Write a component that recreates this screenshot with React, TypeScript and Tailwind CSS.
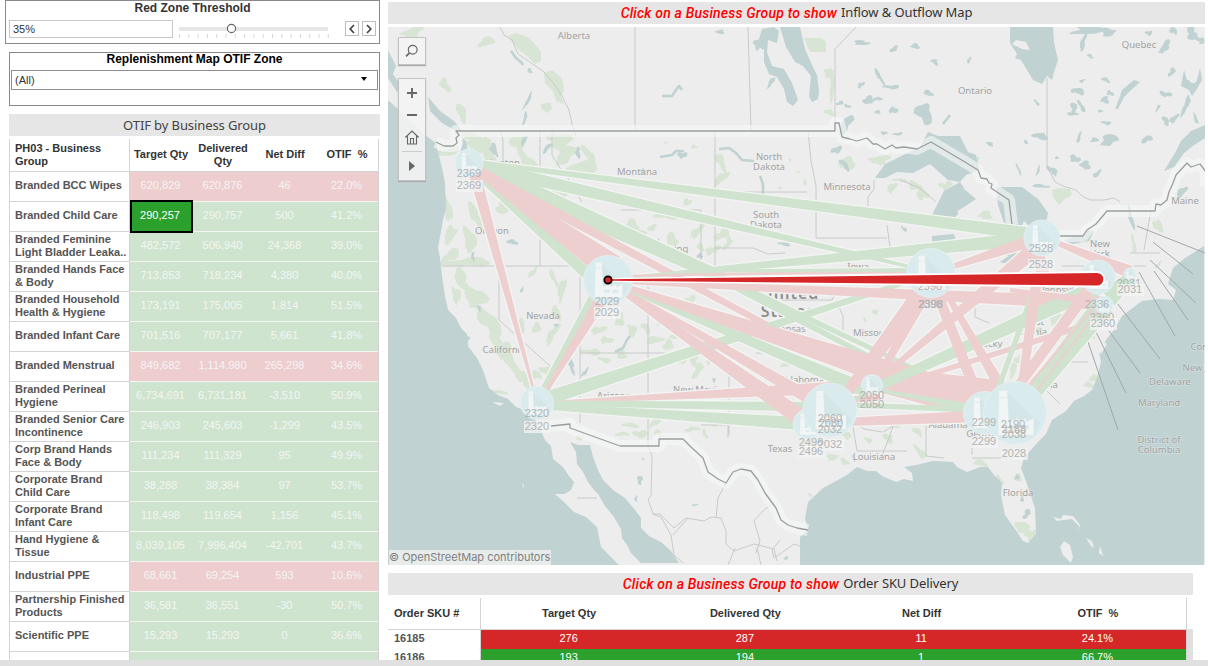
import React from "react";

type Tone = "red" | "green";
type GroupRow = { name: string; cells: string[]; tone: Tone; selected?: boolean };

const GROUPS: GroupRow[] = [
  { name: "Branded BCC Wipes", cells: ["620,829", "620,876", "46", "22.0%"], tone: "red" },
  { name: "Branded Child Care", cells: ["290,257", "290,757", "500", "41.2%"], tone: "green", selected: true },
  { name: "Branded Feminine\nLight Bladder Leaka..", cells: ["482,572", "506,940", "24,368", "39.0%"], tone: "green" },
  { name: "Branded Hands Face\n& Body", cells: ["713,853", "718,234", "4,380", "40.0%"], tone: "green" },
  { name: "Branded Household\nHealth & Hygiene", cells: ["173,191", "175,005", "1,814", "51.5%"], tone: "green" },
  { name: "Branded Infant Care", cells: ["701,516", "707,177", "5,661", "41.8%"], tone: "green" },
  { name: "Branded Menstrual", cells: ["849,682", "1,114,980", "265,298", "34.6%"], tone: "red" },
  { name: "Branded Perineal\nHygiene", cells: ["6,734,691", "6,731,181", "-3,510", "50.9%"], tone: "green" },
  { name: "Branded Senior Care\nIncontinence", cells: ["246,903", "245,603", "-1,299", "43.5%"], tone: "green" },
  { name: "Corp Brand Hands\nFace & Body", cells: ["111,234", "111,329", "95", "49.9%"], tone: "green" },
  { name: "Corporate Brand\nChild Care", cells: ["38,288", "38,384", "97", "53.7%"], tone: "green" },
  { name: "Corporate Brand\nInfant Care", cells: ["118,498", "119,654", "1,156", "45.1%"], tone: "green" },
  { name: "Hand Hygiene &\nTissue", cells: ["8,039,105", "7,996,404", "-42,701", "43.7%"], tone: "green" },
  { name: "Industrial PPE", cells: ["68,661", "69,254", "593", "10.6%"], tone: "red" },
  { name: "Partnership Finished\nProducts", cells: ["36,581", "36,551", "-30", "50.7%"], tone: "green" },
  { name: "Scientific PPE", cells: ["15,293", "15,293", "0", "36.6%"], tone: "green" },
  { name: "", cells: ["", "", "", ""], tone: "green" },
];

const SKUS = [
  { sku: "16185", cells: ["276", "287", "11", "24.1%"], bg: "bg-[#d62728]" },
  { sku: "16186", cells: ["193", "194", "1", "66.7%"], bg: "bg-[#2ca02c]" },
];

const P = "#eecfd0";
const G = "#cfe3cf";

/* [x1, y1, width1, x2, y2, width2, colour] */
type Flow = [number, number, number, number, number, number, string];
const FLOWS: Flow[] = [
  [469, 161, 4, 1038, 235, 13, G],
  [469, 164, 14, 920, 269, 3, G],
  [469, 165, 20, 725, 279, 12, G],
  [720, 277, 7, 985, 402, 3, G],
  [720, 279, 7, 985, 417, 4, G],
  [469, 167, 6, 596, 282, 12, G],
  [469, 166, 10, 870, 380, 5, P],
  [469, 166, 4, 612, 268, 28, P],
  [537, 402, 2, 473, 168, 12, P],
  [540, 398, 8, 600, 290, 14, G],
  [541, 400, 3, 610, 285, 14, P],
  [545, 399, 14, 925, 276, 4, G],
  [537, 403, 2, 872, 386, 14, P],
  [537, 403, 5, 832, 407, 10, G],
  [537, 406, 6, 808, 424, 13, G],
  [608, 281, 5, 812, 426, 18, P],
  [608, 281, 3, 830, 410, 14, P],
  [608, 281, 4, 870, 392, 14, G],
  [608, 281, 4, 985, 405, 32, P],
  [608, 280, 3, 1040, 238, 14, G],
  [608, 276, 2, 930, 271, 4, P],
  [700, 271, 3, 930, 270, 4, G],
  [608, 281, 4, 1104, 303, 14, P],
  [845, 395, 10, 932, 280, 20, P],
  [883, 370, 7, 930, 285, 12, P],
  [872, 385, 4, 1040, 245, 16, P],
  [888, 372, 3, 985, 290, 5, P],
  [872, 378, 24, 1000, 402, 44, P],
  [850, 400, 6, 880, 396, 8, P],
  [850, 405, 5, 985, 410, 6, G],
  [878, 390, 3, 985, 410, 8, G],
  [845, 422, 8, 985, 416, 12, P],
  [850, 402, 3, 905, 375, 5, G],
  [875, 388, 9, 1098, 287, 16, G],
  [925, 376, 5, 1096, 322, 6, P],
  [932, 280, 10, 980, 402, 11, P],
  [940, 283, 3, 975, 345, 3, G],
  [940, 282, 5, 1008, 400, 12, P],
  [936, 272, 4, 1040, 238, 13, P],
  [1036, 250, 14, 1045, 280, 12, P],
  [1034, 290, 6, 996, 395, 5, G],
  [1036, 285, 11, 1020, 400, 8, P],
  [1045, 238, 4, 1130, 272, 13, P],
  [1010, 290, 4, 1100, 302, 8, P],
  [1008, 400, 10, 1092, 285, 12, P],
  [1026, 402, 15, 1104, 305, 22, G],
  [1018, 398, 3, 1100, 300, 2, P],
  [1028, 402, 2, 1100, 308, 2, P],
  [1108, 298, 20, 1132, 276, 10, G],
];

const taper = ([x1, y1, a, x2, y2, b]: Flow) => {
  const len = Math.hypot(x2 - x1, y2 - y1);
  const nx = -(y2 - y1) / len / 2;
  const ny = (x2 - x1) / len / 2;
  return [
    [x1 + nx * a, y1 + ny * a],
    [x2 + nx * b, y2 + ny * b],
    [x2 - nx * b, y2 - ny * b],
    [x1 - nx * a, y1 - ny * a],
  ]
    .map(([x, y]) => x.toFixed(1) + "," + y.toFixed(1))
    .join(" ");
};

/* Irregular outline around a slanted ellipse, used for small lakes and parks. */
const blob = (x: number, y: number, rx: number, ry: number) => {
  const n = 16;
  const pts: string[] = [];
  const p1 = x * 1.7 + y;
  const p2 = x * 0.9 + y * 2.3;
  const shear = Math.sin(x + y * 3) * 0.5;
  for (let i = 0; i < n; i++) {
    const t = (i / n) * Math.PI * 2;
    const jag = Math.sin(x * 12.9 + y * 7.3 + i * i * 31.7) * 0.13;
    const r = 0.82 + 0.2 * Math.sin(2 * t + p1) + 0.2 * Math.sin(3 * t + p2) + jag;
    const dy = Math.sin(t) * ry * r;
    pts.push((x + Math.cos(t) * rx * r + dy * shear).toFixed(1) + "," + (y + dy).toFixed(1));
  }
  return pts.join(" ");
};

const LAKES: number[][] = [
  [530, 71, 3, 2], [528, 100, 2, 8], [525, 118, 2, 6], [524, 141, 2, 6], [494, 150, 4, 6],
  [547, 148, 3, 5], [578, 153, 3, 5], [682, 155, 4, 4],
  [720, 32, 5, 2], [771, 82, 3, 5], [757, 44, 4, 5], [862, 43, 8, 2.5], [894, 49, 4, 3], [915, 46, 5, 2.5], [935, 62, 4, 2.5],
  [861, 85, 3, 3], [879, 76, 2.5, 8], [892, 87, 7, 2.5], [868, 100, 6, 4], [878, 99, 5, 2], [878, 112, 3, 2], [893, 110, 4, 4], [928, 93, 5, 3],
  [924, 113, 8, 11], [846, 124, 6, 9], [840, 103, 4, 2], [847, 106, 3, 2], [837, 150, 5, 4],
  [884, 133, 3, 2], [898, 134, 4, 2], [845, 165, 4, 5],
  [969, 60, 2, 3], [1037, 103, 2, 3], [1040, 136, 7, 4], [990, 144, 4, 2], [1026, 142, 1.5, 3], [1019, 170, 1.5, 5], [1038, 171, 1.5, 5],
  [1053, 171, 4, 5], [1057, 158, 2, 1.5], [1040, 186, 8, 2], [1075, 159, 5, 4], [1085, 165, 6, 4], [1097, 174, 3, 4],
  [1078, 91, 6, 4], [1082, 81, 3, 1.5], [1074, 108, 4, 5], [1072, 114, 5, 2], [1082, 107, 3, 5], [1079, 138, 2, 5], [1106, 80, 4, 2.5],
  [1105, 100, 5, 3], [1110, 93, 3, 3], [1100, 111, 2, 2], [1107, 123, 5, 2], [1110, 140, 10, 5], [1095, 140, 5, 2],
  [1090, 30, 20, 4], [1108, 32, 8, 4], [1083, 43, 3, 8], [1090, 56, 3, 2], [1147, 139, 5, 4], [1149, 33, 3, 3], [1165, 47, 5, 6], [1173, 30, 3, 5],
  [1165, 94, 5, 3.5], [1158, 108, 1.5, 4], [1166, 121, 4, 4], [1174, 119, 4, 4], [1186, 105, 3, 10], [1196, 119, 2, 5],
  [1192, 34, 6, 6], [1200, 40, 4, 4], [1172, 72, 3.5, 4],
  [1182, 192, 4, 6], [1131, 218, 2.5, 11], [643, 171, 2, 3], [556, 325, 2, 2], [479, 308, 2, 3], [522, 290, 1.5, 3], [473, 257, 2, 4],
  [512, 242, 5, 3], [571, 365, 3, 8], [585, 372, 2, 5], [640, 480, 3, 4], [636, 499, 1.5, 3], [695, 505, 3, 1],
  [659, 242, 2, 3], [643, 459, 1, 1.5], [1017, 477, 2, 3], [1027, 514, 4, 4], [1022, 499, 2, 3], [714, 380, 2, 2], [904, 229, 2, 3],
  [786, 558, 2, 2], [784, 244, 6, 2], [467, 340, 2, 4], [700, 256, 3, 3],
];

const PARKS: number[][] = [
  [412, 32, 10, 6], [487, 42, 8, 5], [445, 85, 5, 7], [462, 113, 5, 9],
  [448, 152, 10, 5], [475, 140, 15, 6], [490, 158, 9, 15], [478, 150, 8, 7], [519, 143, 8, 8], [527, 160, 7, 9], [560, 140, 15, 7],
  [566, 154, 11, 9], [582, 168, 12, 10], [598, 178, 10, 5], [590, 158, 6, 11], [560, 190, 14, 7], [548, 200, 10, 7],
  [505, 207, 11, 6], [520, 215, 8, 4], [550, 215, 10, 4], [447, 208, 4, 16], [450, 235, 5, 11], [475, 215, 6, 12], [470, 240, 6, 14],
  [468, 262, 18, 6], [450, 256, 7, 9], [462, 280, 7, 11], [456, 295, 4, 10], [476, 298, 10, 12], [486, 318, 8, 13], [494, 332, 7, 13],
  [502, 348, 7, 13], [511, 362, 7, 11], [519, 374, 7, 8], [528, 384, 6, 6], [498, 392, 10, 2], [535, 375, 6, 5], [545, 370, 6, 4],
  [533, 272, 3, 6], [553, 277, 3, 9], [562, 290, 3.5, 13], [537, 328, 5, 5], [552, 335, 5, 9], [521, 325, 4, 7], [556, 312, 4, 8],
  [598, 330, 6, 5], [606, 340, 6, 4], [620, 320, 6, 6], [632, 330, 5, 6], [646, 328, 4, 6], [655, 340, 8, 4], [668, 345, 6, 5],
  [592, 352, 8, 4], [605, 360, 6, 3], [622, 355, 6, 4], [676, 336, 5, 4], [660, 322, 4, 3],
  [600, 380, 8, 3], [612, 405, 10, 2], [630, 425, 7, 3], [622, 434, 6, 2.5], [640, 434, 6, 5], [655, 422, 4, 6], [658, 433, 4, 4],
  [580, 438, 5, 2], [692, 429, 7, 2.5], [705, 434, 3, 4],
  [632, 225, 8, 5], [642, 234, 6, 4], [665, 215, 10, 5], [672, 240, 6, 7], [668, 252, 5, 4], [652, 228, 5, 3], [605, 225, 8, 4],
  [690, 300, 5, 5], [697, 232, 5, 7], [722, 234, 7, 6], [728, 243, 4, 6], [712, 250, 6, 5], [726, 225, 4, 3], [700, 247, 4, 4],
  [721, 162, 5, 8], [721, 178, 5, 8], [687, 202, 4, 4], [666, 143, 1.5, 1.5], [694, 147, 3, 2],
  [829, 73, 6, 4], [832, 85, 3, 15], [829, 112, 4, 4], [847, 163, 7, 8], [880, 160, 12, 4],
  [892, 188, 4, 6], [915, 186, 6, 5], [922, 194, 5, 7], [900, 180, 7, 2], [946, 188, 6, 4], [985, 215, 8, 4], [948, 184, 5, 3],
  [977, 160, 3, 3], [805, 182, 2, 3], [798, 172, 1.5, 1.5], [790, 160, 1.5, 1.5], [780, 188, 2, 1.5], [693, 358, 5, 8], [698, 370, 5, 7],
  [684, 360, 4, 5], [735, 372, 3, 7], [710, 360, 3, 5], [1013, 370, 4, 7], [1030, 330, 9, 5], [1025, 350, 4, 9], [1020, 360, 5, 5],
  [1055, 318, 8, 6], [1094, 378, 4, 5], [1089, 385, 6, 3], [1134, 245, 2.5, 8], [1158, 226, 4, 8], [1158, 265, 2, 4], [1090, 335, 4, 4],
  [846, 435, 4, 5], [832, 457, 7, 3], [845, 462, 4, 4], [868, 440, 4, 3], [888, 438, 5, 5], [895, 425, 5, 3], [918, 432, 4, 5],
  [920, 452, 5, 6], [980, 463, 8, 3], [1018, 478, 4, 4], [1022, 527, 7, 6], [1031, 535, 6, 8], [1020, 547, 6, 1.5],
  [1000, 480, 3, 4], [810, 495, 2, 2], [785, 365, 5, 2], [865, 320, 2, 2], [875, 312, 3, 3], [715, 425, 3, 2], [648, 415, 4, 2],
];

/* [x, y, text] */
const LABELS: [number, number, string][] = [
  [574, 39, "Alberta"], [1139, 48, "Quebec"], [975, 94, "Ontario"], [493, 166, "Washington"], [637, 175, "Montana"],
  [769, 160, "North"], [769, 170, "Dakota"], [847, 190, "Minnesota"], [766, 218, "South"], [766, 228, "Dakota"], [1185, 204, "Maine"],
  [492, 234, "Oregon"], [667, 252, "Wyoming"], [543, 319, "Nevada"], [504, 353, "California"], [614, 399, "Arizona"],
  [700, 393, "New Mexico"], [858, 270, "Iowa"], [790, 332, "Kansas"], [872, 336, "Missouri"], [801, 383, "Oklahoma"], [780, 452, "Texas"],
  [874, 460, "Louisiana"], [948, 428, "Alabama"], [1018, 496, "Florida"], [1100, 247, "New"], [1100, 257, "York"],
  [1068, 293, "Pennsylvania"], [982, 347, "Kentucky"], [1033, 325, "West"], [1030, 335, "Virginia"], [941, 379, "Tennessee"],
  [1025, 388, "North Carolina"], [984, 437, "Georgia"], [1170, 385, "Delaware"], [1159, 406, "Maryland"],
  [1159, 443, "District of"], [1159, 453, "Columbia"], [1217, 350, "Connecticut"], [1207, 371, "New Jersey"],
];

/* [cx, cy, r] */
const NODES: [number, number, number][] = [
  [469, 163, 14], [608, 280, 24.5], [537, 403, 16.5], [808, 424, 15], [830, 410, 27], [872, 385, 10.5], [931, 273, 24.5],
  [1042, 238, 18], [1098, 277, 17], [1104, 305, 9], [1130, 274, 6], [985, 413, 21.5], [1015, 413, 31.5],
];

/* [x, y, code, boxed] */
const CODES: [number, number, string, boolean][] = [
  [469, 177, "2369", false], [469, 189, "2369", true], [607, 305, "2029", false], [607, 316, "2029", true],
  [537, 417, "2320", false], [537, 430, "2320", true], [830, 422, "2060", false], [831, 427, "2080", false], [830, 433, "2032", false],
  [830, 448, "2032", true], [811, 446, "2496", false], [811, 455, "2496", true], [872, 399, "2050", false], [872, 408, "2050", false],
  [930, 290, "2398", false], [930, 308, "2398", false], [931, 308, "2398", false], [1041, 252, "2528", false], [1041, 268, "2528", true],
  [1097, 308, "2336", false], [1102, 321, "2360", false], [1103, 327, "2360", true], [1129, 287, "2031", false], [1130, 293, "2031", true],
  [984, 426, "2299", false], [984, 445, "2299", true], [1013, 428, "2190", false], [1014, 433, "2188", false], [1014, 438, "2038", false],
  [1014, 457, "2028", true],
];

const NORTH_BORDER =
  "M436 142l8 4 9 0 4-3-1-5 3-3-3-4H835v-8h4l3 14 8 2 7 2 10-3 3 3 3 3 4 0 8 5 7-4 4 3 8-1 13 2 6-3 8-4 34 20 13 8 3 8 6 1 2 4 3 1-1 4 18 12 3 25";
const EAST_BORDER =
  "M1058 236h25l4-6 9-6 11-13h48l1-7 5 1 6-5 2-8 4-9 3-8 11-12 4 4 9-3 6 8v14";
const MEXICO_BORDER =
  "M551 426l19-2v4l50 18h39v-7h24l8 8 12 11 5 14 10 7 8 4 7-11 8-3 10 2 7 9 7 13 11 15 5 12 7 5 9 3 11 2";
const STATE_LINES =
  "M501 131l2 10 0 30M552 131v24l8 13 8 10 6 12 8 12M540 131v39M540 232v34M442 266h138v60M499 266v54l51 46M580 340v83M580 353h85M648 280v165M621 210h80v70M715 131v136M715 192h92M715 248h38l15 6 17-1M808 131l3 30 5 25 0 18M816 210v28h71M635 27v103M748 27l3 103M835 131V49l21-22M1047 78v88l8 16 8 4 13 4 6 6 8 4 14 0 10-2 6 4M782 300h50l2-4M756 353h15M729 365v70M701 425h27v13M836 300l7 16 0 14M887 225l3 22M868 210l0-13 6-8 0-9M900 180l20 8 16 14M926 426v30l18 2M907 451h-50l-5-30 12 8 18 3M852 455l3 7M1064 362h24M1046 390l14 14M1130 253h30M1151 210l-7 40M1124 266h22M1062 266h22M975 305v12l14 6M972 458h42M972 425v30M883 432l10-6-4 12-8 20";
const MEXICO_STATES =
  "M648 446l4 10-1 40-3 3 5 15 8 3 10 18 3 20 9 8M653 514l7 0 14 14 12-10 18 3 7-4 10 1 5 13 0 13 8 7 20-7 20 5 3 12M726 483l-8 15-2 20M774 502l-12 10-8 9 6 20-4 12M673 535l15-17M577 498h20M780 540l-8 10 2 8 20-14 8 3M735 548l-7 17M757 548l4 17";

const PACIFIC =
  "M388 100l10 9 14 14 13 12 11 8 2 9 4 16 3 15 1 25-3 12-5 28 2 10 2 18 3 20 3 14 8 8 5 10 6 6 1 12 9 12 5 10 3 8 4 12 9 7 10 4 8 8 14 5 8 12 7 16 6 6 2 13 10 8 6 9 5 6-3 8-6 4-10 0 9 8 10 10 12 5 11 10 4 20 8 8 16 16H388z";
const CORTEZ =
  "M570 442l8 3 12 0 3 12 5 13 5 10 10 10 12 8 10 12 6 8 0 10 8 8 12 6 10 9 8 12H641l-10-10-4-8-5-7-1-9-7-12-9-11-7-12-4-4-6-8-5-10-6-8-1-12z";
const ATLANTIC =
  "M800 565v-28l8-7-3-12 3-16 15-14 24-13 10-8 10 4 9 0 6 5 14 6 8-3 9 2-1-8-8-6 12-2 17-4 20 1 4 5 10 5 13-5 8 0 6 8 8 8-1 12 4 20 10 14 8 12 5 2 8-9-1-26-8-24-6-16 3-10 12-14 10-10 6-14 14-9 8-10 10-5 8-6 5-12 4-16-2-10 7-12 8-10 8-14 20-15 17-2 14 1 3-10-8-6 5-16 12-10 19-12V565z";

function Factory({ x, y, r }: { x: number; y: number; r: number }) {
  const k = r / 24;
  return (
    <g>
      <circle cx={x} cy={y} r={r} fill="#daebee" stroke="#e6f1f3" strokeWidth={0.8} />
      <path
        d={`M${x - 6 * k} ${y - 16 * k}L${x + 19 * k} ${y + 8 * k}L${x + 13 * k} ${y + 18 * k}L${x - 12 * k} ${y + 18 * k}z`}
        fill="#d5e6e9"
      />
      <path
        fill="#f2f5f5"
        d={`M${x - 12 * k} ${y - 17 * k}h${6 * k}l${1.2 * k} ${24 * k}l${7 * k} ${-3 * k}v${3 * k}l${6 * k} ${-3 * k}v${3 * k}l${6 * k} ${-3 * k}v${13 * k}h${-27 * k}z`}
      />
      <path
        fill="#daebee"
        d={`M${x - 4 * k} ${y + 9.5 * k}h${6 * k}v${3 * k}h${-6 * k}zM${x + 4.5 * k} ${y + 9.5 * k}h${6 * k}v${3 * k}h${-6 * k}zM${x - 12 * k} ${y - 12 * k}h${6 * k}v${0.8}h${-6 * k}z`}
      />
    </g>
  );
}

function FlowMap() {
  return (
    <svg viewBox="388 27 817 538" className="block h-[538px] w-[817px]">
      <rect x="388" y="27" width="817" height="538" fill="#ededed" />
      <g fill="#d9e5d4">
        <path d="M508 36l8-3 12 4 6 6 7 9 0 9-6 3-8-8-9-7z" />
        <path d="M544 73l8-3 10 8 2 12-3 6 3 8-8-3-3-10-8-8zM541 104l9-2 2 6-4 5-7-4z" />
        <path d="M804 38l18 0 4 4 0 10-16 0-3-6zM1052 190l6-2 12 1 2 6-7 4-6 6-6-8z" />
        {PARKS.map(([x, y, a, b], i) => (
          <polygon key={i} points={blob(x, y, a * 1.15, b * 1.15)} />
        ))}
      </g>
      <g fill="#c0d2d2">
        <path d={PACIFIC} />
        <path d={CORTEZ} />
        <path d={ATLANTIC} />
        <path d="M388 50l4 8 4 8-3 8 8 12-4 6-9-14zM428 97l12 14 14 10 10 12-8-2-14-8-12-12zM462 137l4 4 2 12-3 5-5-4 2-8z" />
        <path d="M780 27h20l5 22 7 16 5 10 2 16-1 8-6 3-3-6 2-20-8-10-8-4-9-15z" />
        <path d="M762 29l12-2 5 4-2 12-9-3-1 12 5 14 12 3 8 14 6 17-5 6-6-4-3-13-7-12-8-3-5-12 0-12-7-4z" />
        <path d="M875 178l10-14 35-17 8-15 10 4 22 0 8 16 8 3 3 14-5 3-8 3-6 7-12-2-18-16-17 9-16-1-12 6z" />
        <path d="M960 182l4 6-8 14 2 12-8 8-4-6-16 3 10-20 4-8zM944 197l20-8 12 10-12 8-20 12z" />
        <path d="M932 236l22-2 2 8-24 2zM996 187h26l16 12 10 14-4 22-10-4-10-10-4 10-2 18-10 8-6-14 2-20-6-18z" />
        <path d="M1000 262l20-14 14 2-22 15zM1064 240l20-6 4-4 6 1-5 10-22 4z" />
        <path d="M1010 27h43l1 16 4 17-4 12-2 8-5-4-5 8-9-4-6-10-6-10-6-2 2-4-7-11z" />
        <path d="M1205 125l-14 6-10 10-6 12-11 18 10-4 10-14 10-8 11-7zM1122 90l12-10 6 2-10 9-6 6-6 12-3 0 4-10zM1184 70l3 10h10l3-12 2 12-7 12-3 4-3-6-8-4z" />
      </g>
      <g fill="none" stroke="#c0d2d2" strokeWidth="2.600" strokeLinejoin="round">
        <path d="M511 51l5 7 5 4 2 3M662 96l10 0 4-6 3-4 3 4M719 149l10-1 7 5 6 7 12 1M760 176l3 8 0 12M660 157l12-2 4-4 8 0M943 124l7-9M615 352l8-4 4-8 3-4" />
      </g>
      <path d="M1012 44l4-4 10 2 4 8-8-1z" fill="#ededed" />
      <circle cx="1193" cy="79" r="4" fill="#ededed" />
      <path
        fill="#ededed"
        d="M1053 517l8 2 2-4 10 1 7 9-2 7 1-6-7-7-9 1-6 1zM1064 541l6 4 3 12-2 6-8-8-3-8zM1086 538l6 3 2 7-3-2zM1100 546l3 10-4-3zM522 482l2 4-1 2zM563 500l3-8 2 8zM1097 350l6-8 4 2-6 10zM492 402l12 1-4 3z"
      />
      <g fill="#c0d2d2">
        {LAKES.map(([x, y, a, b], i) => (
          <polygon key={i} points={blob(x, y, a * 1.15, b * 1.15)} />
        ))}
      </g>
      <g fill="none" stroke="#c4c6c6" strokeWidth="0.900">
        <path d={STATE_LINES} />
        <path d={MEXICO_STATES} />
        <path d="M500 27l4 8 8 5 6 14 12 8 14 10 10 12 8 12 7 14 3 14 4 12" />
      </g>
      <g fill="none" stroke="#f6f8f7" strokeOpacity="0.620" strokeWidth="12" strokeLinejoin="round">
        <path d={NORTH_BORDER} />
        <path d={EAST_BORDER} />
        <path d={MEXICO_BORDER} />
      </g>
      <g fill="none" stroke="#9c9e9e" strokeWidth="1.300" strokeLinejoin="round">
        <path d={NORTH_BORDER} />
        <path d={EAST_BORDER} />
        <path d={MEXICO_BORDER} />
      </g>
      <path
        d="M1137 226l68 27M1153 242l40 32M1150 260l46 43M1154 271l34 49M1139 272l36 64M1117 303l43 56M1109 331l31 42M1096 332l30 61M1087 339l31 91"
        fill="none"
        stroke="#a3a8a8"
        strokeWidth="1"
      />
      <g className="font-['Noto_Sans',sans-serif] text-[9.5px]" textAnchor="middle" fill="#a0a4a4" stroke="#f0f0f0" strokeWidth="1.500" paintOrder="stroke" strokeOpacity="0.400">
        {LABELS.map(([x, y, t], i) => (
          <text key={i} x={x} y={y}>
            {t}
          </text>
        ))}
      </g>
      <g className="font-['Noto_Sans',sans-serif] text-[16px] font-semibold" textAnchor="middle" fill="#8d8f8f">
        <text x="790" y="299" letterSpacing="1">United</text>
        <text x="788" y="317" letterSpacing="1">States</text>
      </g>
      <g stroke="#f3f5f3" strokeWidth="2.600" strokeLinejoin="round">
        {FLOWS.map((f, i) => (
          <polygon key={i} points={taper(f)} fill={f[6]} />
        ))}
      </g>
      <g>
        {FLOWS.map((f, i) => (
          <polygon key={i} points={taper(f)} fill={f[6]} />
        ))}
      </g>
      {NODES.map(([x, y, r], i) => (
        <Factory key={i} x={x} y={y} r={r} />
      ))}
      <g className="font-['Liberation_Sans',sans-serif] text-[11px]" textAnchor="middle" fill="#b1b3b4">
        {CODES.map(([x, y, t, boxed], i) => (
          <g key={i}>
            {boxed && <rect x={x - 13} y={y - 9} width="27" height="12" fill="#f1f2f2" fillOpacity="0.800" />}
            <text x={x} y={y}>
              {t}
            </text>
          </g>
        ))}
      </g>
      <path d="M608 278L1097 271a8 8 0 0 1 0 16.600L608 282z" fill="#fff" />
      <path d="M608 279.300L1097 273a6.300 6.300 0 0 1 0 12.600L608 280.800z" fill="#d62728" />
      <circle cx="608" cy="280" r="3.700" fill="#d62728" stroke="#000" strokeWidth="1.800" />
    </svg>
  );
}

function MapControls() {
  return (
    <div className="absolute top-[10px] left-[10px] flex flex-col gap-[13px]">
      <div className="flex h-[28px] w-[28px] items-center justify-center border border-[#c3c3c3] bg-[#f3f3f3] shadow-[0_1px_1px_#aaa]">
        <svg viewBox="0 0 14 14" className="h-[14px] w-[14px]" fill="none" stroke="#666" strokeWidth="1.200">
          <circle cx="7.700" cy="5.700" r="4.400" />
          <path d="M4.500 8.900L1 12.400" strokeWidth="1.600" />
        </svg>
      </div>
      <div className="h-[103px] w-[28px] border border-[#c3c3c3] bg-[#f3f3f3]/90 shadow-[0_1px_1px_#aaa]">
        <svg viewBox="0 0 26 101" className="h-[101px] w-[26px]" fill="none" stroke="#666">
          <path d="M8 14h10M13 9v10M8 36h10" strokeWidth="1.900" />
          <path d="M6.300 58.500L13 52l6.700 6.500M8.500 56.500V65h9v-8.500M11.500 65v-5.500h3V65" strokeWidth="1.100" />
          <path d="M3 72.500h20" stroke="#ccc" />
          <path d="M10 82v10l6-5z" fill="#666" stroke="none" />
        </svg>
      </div>
    </div>
  );
}

function StepButton({ d }: { d: string }) {
  return (
    <div className="flex h-[15px] w-[14px] items-center justify-center border border-[#bdbdbd] bg-white">
      <svg viewBox="0 0 8 10" className="h-[10px] w-[8px]" fill="none" stroke="#444" strokeWidth="1.700">
        <path d={d} />
      </svg>
    </div>
  );
}

function SectionTitle({ hint, title, width }: { hint: string; title: string; width: string }) {
  return (
    <div className={`flex h-[22px] shrink-0 items-center justify-center gap-[4px] bg-[#e6e6e6] text-[13px] whitespace-nowrap ${width}`}>
      <span className="font-[Roboto,sans-serif] text-[14px] font-medium tracking-[0.200px] text-[#f00] italic">{hint}</span>
      <span className="font-['Noto_Sans',sans-serif] tracking-[-0.100px] text-[#333]">{title}</span>
    </div>
  );
}

export default function App() {
  const ticks = Array.from({ length: 17 }, (_, i) => i);
  return (
    <div className="flex h-[666px] w-[1208px] flex-col overflow-hidden bg-white font-['Liberation_Sans',Arial,sans-serif] text-[11px] text-[#333]">
      <div className="flex h-[660px] overflow-hidden">
        <aside className="flex w-[388px] shrink-0 flex-col">
          <section className="ml-[5px] h-[44px] w-[375px] shrink-0 border border-[#898989] pr-[3px] pl-[3px]">
            <h2 className="h-[19px] text-center text-[12px] leading-[14px] font-bold">Red Zone Threshold</h2>
            <div className="flex items-start">
              <div className="h-[18px] w-[164px] border border-[#c8c8c8] pl-[3px] text-[11px] leading-[17px]">35%</div>
              <svg viewBox="0 0 152 18" className="ml-[5px] h-[18px] w-[152px]">
                <rect x="1" y="7" width="149" height="4" fill="#e6e6e6" />
                {ticks.map((i) => (
                  <rect key={i} x={1 + i * 9.3} y="14" width="1" height="4" fill="#d8d8d8" />
                ))}
                <circle cx="53.500" cy="8.500" r="4.100" fill="#fff" stroke="#666" strokeWidth="1.200" />
              </svg>
              <div className="mt-px ml-[15px] flex gap-[3px]">
                <StepButton d="M6 1L2.200 5L6 9" />
                <StepButton d="M2 1L5.800 5L2 9" />
              </div>
            </div>
          </section>

          <section className="mt-[8px] ml-[9px] h-[54px] w-[371px] shrink-0 border border-[#898989] px-px">
            <h2 className="h-[17px] text-center text-[12px] leading-[12px] font-bold text-black">
              Replenishment Map OTIF Zone
            </h2>
            <div className="flex h-[20px] w-[367px] items-center justify-between border border-[#8e8e8e] pr-[10px] pl-[3px]">
              <span>(All)</span>
              <svg viewBox="0 0 6 4" className="mb-[3px] h-[4px] w-[6px]">
                <path d="M0 0h6L3 4z" fill="#000" />
              </svg>
            </div>
          </section>

          <h2 className="mt-[8px] ml-[9px] flex h-[22px] w-[371px] shrink-0 items-center justify-center bg-[#e6e6e6] pt-px font-['Noto_Sans',sans-serif] text-[13px] tracking-[-0.100px] whitespace-nowrap text-[#444]">
            OTIF by Business Group
          </h2>

          <div className="mt-[3px] ml-[9px] w-[370px] shrink-0 border-x border-[#d4d4d4]">
            <div className="flex h-[33px] border-b border-[#d4d4d4] leading-[13px] font-bold">
              <div className="flex w-[120px] items-center border-r border-[#d4d4d4] pl-[5px]">
                PH03 - Business
                <br />
                Group
              </div>
              <div className="grid w-[248px] grid-cols-4 items-center pb-px text-center">
                <span className="whitespace-nowrap">Target Qty</span>
                <span>Delivered Qty</span>
                <span>Net Diff</span>
                <span className="whitespace-pre">OTIF  %</span>
              </div>
            </div>
            {GROUPS.map((g, i) => (
              <div key={i} className="flex h-[30px]">
                <div className="flex w-[120px] items-center border-r border-b border-[#d4d4d4] pb-[2px] pl-[5px] leading-[13px] font-bold whitespace-pre text-[#555]">
                  {g.name}
                </div>
                <div
                  className={`grid w-[248px] grid-cols-4 border-b border-[#f4f6f4] text-center leading-[27px] text-[#f3f5f3] ${
                    g.tone === "red" ? "bg-[#eecdcf]" : "bg-[#cfe4cf]"
                  }`}
                >
                  {g.cells.map((c, j) =>
                    g.selected && j === 0 ? (
                      <span
                        key={j}
                        className="relative z-10 -mt-[2px] h-[33px] w-[63px] border-2 border-black bg-[#2ca02c] pr-[3px] leading-[27px] text-white"
                      >
                        {c}
                      </span>
                    ) : (
                      <span key={j} className="pr-px">{c}</span>
                    )
                  )}
                </div>
              </div>
            ))}
          </div>
        </aside>

        <main className="flex w-[817px] shrink-0 flex-col pt-[2px]">
          <SectionTitle hint="Click on a Business Group to show" title="Inflow & Outflow Map" width="w-[817px]" />
          <div className="relative mt-[3px] h-[538px] shrink-0">
            <FlowMap />
            <MapControls />
            <div className="absolute bottom-0 left-px h-[15px] bg-[#edf0ef]/85 pr-px font-[Inter,sans-serif] text-[11px] leading-[15px] whitespace-nowrap text-[#808080]">
              © OpenStreetMap contributors
            </div>
          </div>
          <div className="mt-[8px] shrink-0">
            <SectionTitle hint="Click on a Business Group to show" title="Order SKU Delivery" width="w-[805px]" />
          </div>
          <div className="mt-[3px] flex w-[805px] shrink-0">
            <div className="w-[799px] border-r border-[#d4d4d4]">
              <div className="flex h-[32px] border-b border-[#d4d4d4] font-bold">
                <div className="flex w-[93px] items-center border-r border-[#d4d4d4] pb-px pl-[6px]">Order SKU #</div>
                <div className="grid w-[705px] grid-cols-4 items-center pb-px text-center">
                  <span>Target Qty</span>
                  <span>Delivered Qty</span>
                  <span>Net Diff</span>
                  <span className="whitespace-pre">OTIF  %</span>
                </div>
              </div>
              {SKUS.map((s) => (
                <div key={s.sku} className="flex h-[19px] leading-[17px]">
                  <div className="w-[93px] border-r border-[#d4d4d4] pl-[6px] font-bold text-[#555]">{s.sku}</div>
                  <div className={`grid w-[705px] grid-cols-4 text-center text-white ${s.bg}`}>
                    {s.cells.map((c, j) => (
                      <span key={j} className="pr-px">{c}</span>
                    ))}
                  </div>
                </div>
              ))}
            </div>
            <div className="mt-[31px] flex-1 bg-[#e0e0e0]" />
          </div>
        </main>
      </div>
      <div className="h-[6px] shrink-0 bg-[#e0e0e0]" />
    </div>
  );
}
